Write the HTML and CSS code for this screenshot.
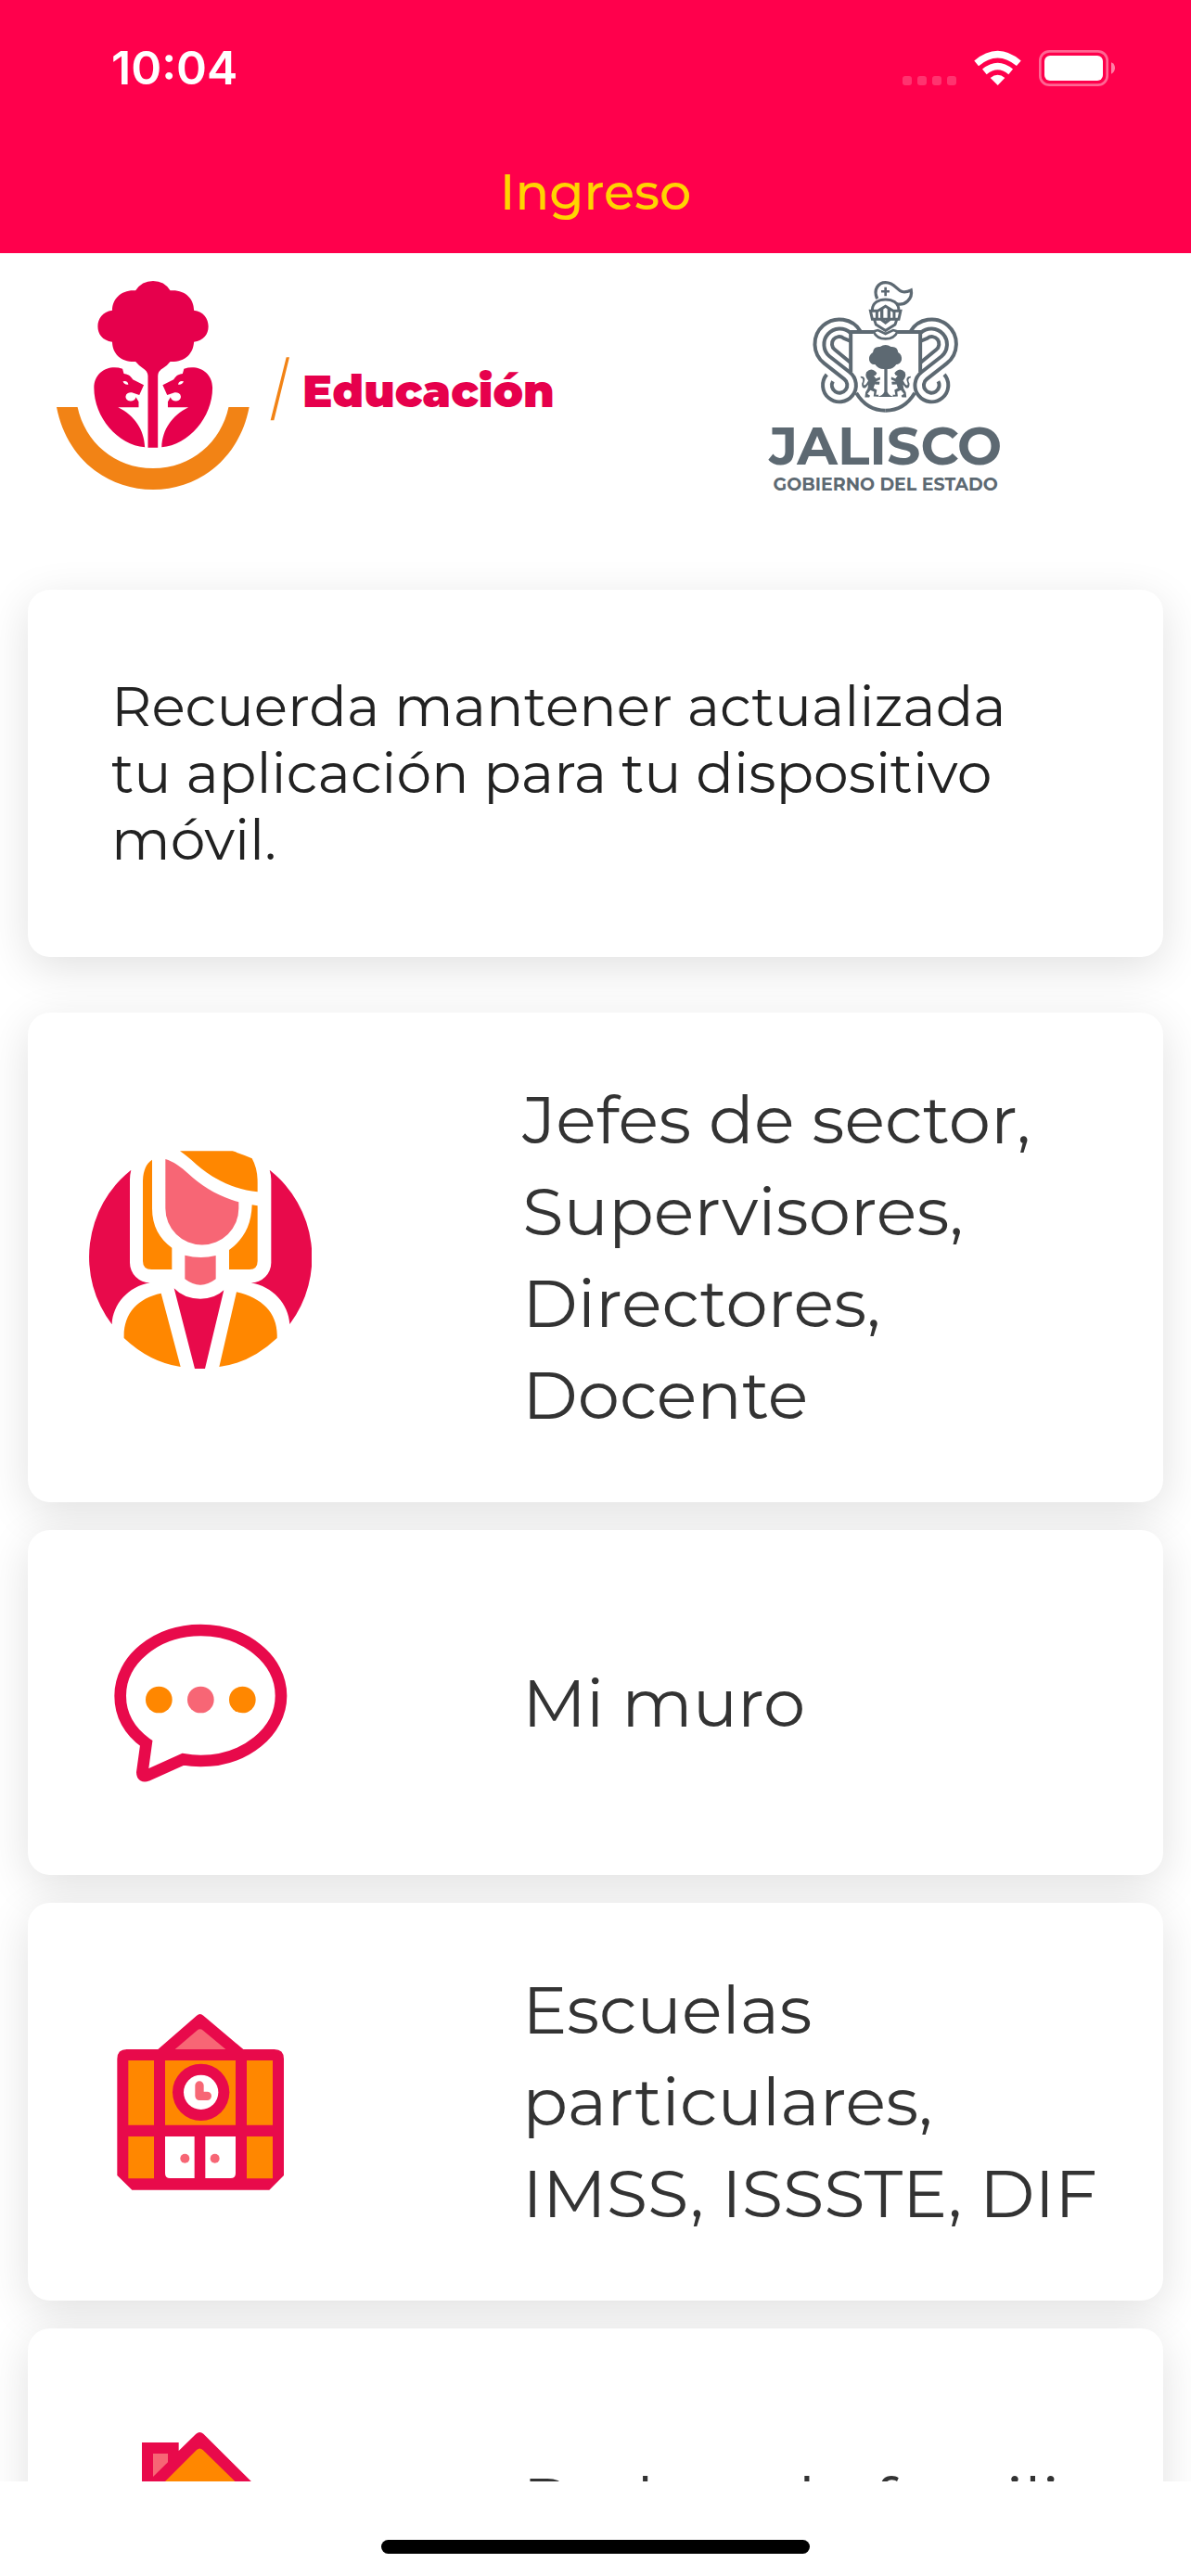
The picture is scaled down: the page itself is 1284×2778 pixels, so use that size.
FILE: index.html
```html
<!DOCTYPE html>
<html lang="es">
<head>
<meta charset="utf-8">
<meta name="viewport" content="width=device-width, initial-scale=1">
<title>Ingreso</title>
<link rel="stylesheet" href="styles.css">
</head>
<body>
<header class="header">
  <div class="status">
    <span class="time">10:04</span>
    <svg class="status-icons" viewBox="39 39 687 117" aria-hidden="true">
      <g fill="#fff" fill-opacity=".2">
        <rect x="39" y="123" width="30" height="30" rx="9"/>
        <rect x="87" y="123" width="30" height="30" rx="9"/>
        <rect x="135" y="123" width="30" height="30" rx="9"/>
        <rect x="183" y="123" width="30" height="30" rx="9"/>
      </g>
      <g fill="none" stroke="#fff" stroke-width="22">
        <path d="M278 82Q347 24 415 82"/>
        <path d="M304 109Q347 74 389 109"/>
      </g>
      <path fill="#fff" d="M323 129Q347 110 370 129L347 153Z"/>
      <rect x="484" y="43" width="217" height="109" rx="30" fill="none" stroke="#fff" stroke-opacity=".4" stroke-width="8"/>
      <rect x="498" y="57" width="189" height="81" rx="18" fill="#fff"/>
      <path fill="#fff" fill-opacity=".5" d="M714 79Q726 84 726 97T714 116Z"/>
    </svg>
  </div>
  <h1 class="title">Ingreso</h1>
</header>

<main class="content">
  <div class="logos">
    <div class="logo-edu">
      <svg class="edu-mark" viewBox="57 39 678 675" preserveAspectRatio="none" aria-hidden="true">
        <g fill="#e6004c">
          <path d="M287 70Q305 39 338 39T388 70C430 66 457 95 457 134C485 138 499 160 499 186S485 232 457 236C455 275 430 302 388 300Q380 312 368 320Q352 330 352 346V578H323V346Q322 330 308 321Q296 312 287 300C245 302 220 275 219 236C190 232 177 210 177 186S190 138 219 134C219 95 248 66 287 70Z"/>
          <path id="lion" fill-rule="evenodd" d="M249 323C210 308 166 332 166 385C166 480 235 570 314 577C312 520 284 474 236 448H296V430L288 415A15 14 0 1 1 276 400L298 408L311 376L279 358C272 344 262 340 253 339ZM250 364Q264 360 266 374Q254 376 250 364Z"/>
          <use href="#lion" transform="translate(677 0) scale(-1 1)"/>
        </g>
        <path fill="#f28315" d="M57 447H118C140 560 225 645 338 645S536 560 558 447H618C590 610 475 714 338 714S85 610 57 447ZM726 286H735L690 490H680Z"/>
      </svg>
      <span class="edu-name">Educación</span>
    </div>
    <div class="logo-jal">
      <svg class="jal-mark" viewBox="25 24 471 428" aria-hidden="true">
        <g fill="none" stroke="#5d6972" stroke-width="12">
          <g id="scroll">
            <path d="M180 188A80 80 0 1 0 62 292L127 343A25 25 0 1 1 90 350"/>
            <path d="M147 193A51 51 0 1 0 79 269L144 320A54 54 0 1 1 70 328"/>
            <path d="M148 220L125 210A23 23 0 1 0 96 247L148 290"/>
            <path d="M222 190H148V320M166 388Q200 445 261 445"/>
          </g>
          <use href="#scroll" transform="translate(522 0) scale(-1 1)"/>
          <path d="M222 188Q232 212 261 212T300 188L286 184L261 196L236 184Z" stroke-width="8"/>
          <path d="M234 82C220 52 238 29 261 29C302 29 298 76 344 54C350 82 324 106 296 98" stroke-width="10"/>
          <path d="M218 118C218 94 240 84 261 84S304 94 304 118M212 121H236L261 106L286 121H310L304 148H218ZM224 148L230 166L261 185L292 166L298 148M233 122V146M289 122V146M244 147L261 160L278 147" stroke-width="9"/>
        </g>
        <g fill="#5d6972">
          <path d="M257 44H265V54H274V62H265V73H257V62H247V54H257ZM244 118L254 112V148L244 144ZM267 112L277 118V144L267 148Z"/>
          <path d="M243 238Q261 226 279 238Q300 236 302 256Q316 264 313 282Q307 297 296 295Q286 311 267 310V384Q270 396 291 401H231Q254 396 257 384V310Q238 311 227 295Q213 298 208 282Q205 266 220 256Q222 236 243 238Z"/>
          <path id="crest-lion" d="M199 320Q213 306 227 317L233 323L229 331L223 332L230 341L243 336L244 344L229 351L242 352L241 361L226 360L222 372L233 378L230 394H239L237 400L222 399L224 384L212 379L202 391L211 397L208 402H194L196 386L203 374L205 361L196 371Q184 376 184 358Q193 341 180 338V334Q201 335 190 358Q189 367 198 359L205 348Q193 334 199 320Z"/>
          <use href="#crest-lion" transform="translate(523 0) scale(-1 1)"/>
        </g>
      </svg>
      <span class="jal-name">JALISCO</span>
      <span class="jal-sub">GOBIERNO DEL ESTADO</span>
    </div>
  </div>

  <p class="card notice">Recuerda mantener actualizada tu aplicación para tu dispositivo móvil.</p>

  <nav class="menu">
    <a class="card item" href="#docentes">
      <svg class="icon" viewBox="48 48 720 720" aria-hidden="true">
        <path fill="#e80a4b" d="M184 125Q180 140 180 160V425A65 65 0 0 0 245 490C175 503 125 558 122 625A360 360 0 0 1 184 125ZM632 125Q637 140 637 160V425A65 65 0 0 1 572 490C642 503 693 558 697 624A360 360 0 0 0 632 125ZM323 508Q355 542 408 542Q455 542 484 514L423 768H390Z"/>
        <path fill="#ff8700" d="M252 92C230 105 222 135 222 165V420Q222 447 250 447H316V377C275 348 252 305 252 250ZM575 238L593 241V420Q593 447 567 447H501V384C548 350 573 305 575 238ZM342 64H512Q545 74 575 88Q593 120 593 165V196C520 190 450 155 395 107Q365 80 342 64ZM281 524L344 762Q245 748 161 669C158 590 205 540 281 524ZM525 520C610 540 660 590 656 669Q570 750 469 762Z"/>
        <path fill="#f76675" d="M295 90C320 97 345 115 370 138C415 180 470 212 532 229V250A118 117 0 0 1 295 250ZM358 401Q408 415 458 402V478Q408 516 358 478Z"/>
      </svg>
      <span class="label">Jefes de sector, Supervisores, Directores, Docente</span>
    </a>
    <a class="card item" href="#muro">
      <svg class="icon" viewBox="-12 -44 720 720" aria-hidden="true">
        <path fill="none" stroke="#e80a4b" stroke-width="38" d="M173 448C118 408 89 355 89 294C89 178 205 82 349 82S609 178 609 294S493 505 349 505Q320 505 292 500L176 552Q160 558 160 542Z"/>
        <circle cx="214" cy="307" r="43" fill="#ff8700"/>
        <circle cx="349" cy="307" r="43" fill="#f76675"/>
        <circle cx="484" cy="307" r="43" fill="#ff8700"/>
      </svg>
      <span class="label">Mi muro</span>
    </a>
    <a class="card item" href="#escuelas">
      <svg class="icon" viewBox="-12 -12 720 720" aria-hidden="true">
        <path fill="#e80a4b" d="M211 177L336 68Q347 58 358 68L487 177H587Q618 177 618 208V585L571 632H127L79 585V208Q79 177 110 177Z"/>
        <path fill="#f76675" d="M266 177L337 116Q347 108 357 116L430 177Z"/>
        <path fill="#ff8700" d="M115 213H198V422H115ZM234 213H462V422H234ZM498 213H582V422H498ZM115 459H198V595H115ZM498 459H582V595H498Z"/>
        <circle cx="350" cy="316" r="92" fill="#e80a4b"/>
        <circle cx="350" cy="316" r="56" fill="#fff"/>
        <path fill="none" stroke="#f76675" stroke-width="28" stroke-linecap="round" stroke-linejoin="round" d="M345 294V328H370"/>
        <path fill="#fff" d="M234 459H329V594H250Q234 594 234 578ZM364 459H462V578Q462 594 446 594H364Z"/>
        <circle cx="298" cy="530" r="15" fill="#f76675"/>
        <circle cx="395" cy="530" r="15" fill="#f76675"/>
      </svg>
      <span class="label">Escuelas particulares, IMSS, ISSSTE, DIF</span>
    </a>
    <a class="card item" href="#familia">
      <svg class="icon" viewBox="-102 -69 720 720" aria-hidden="true">
        <path fill="#e80a4b" d="M69 102H188V129L244 74Q256 64 268 74L520 325H450V560H69V325H-4L69 252Z"/>
        <path fill="#f76675" d="M105 138H153V166L105 213Z"/>
        <path fill="#ff8700" d="M105 267L246 126Q256 117 266 126L414 271V524H105Z"/>
      </svg>
      <span class="label">Padres de familia</span>
    </a>
  </nav>
</main>

<footer class="home"><span class="home-bar"></span></footer>
</body>
</html>
```
FILE: styles.css
```css
* {
  box-sizing: border-box;
}

body {
  margin: 0;
  height: 100vh;
  display: flex;
  flex-direction: column;
  background: #fff;
  color: #222;
  font-family: Montserrat, Inter, sans-serif;
}

.header {
  flex: none;
  background: #ff004c;
}

.status {
  display: flex;
  justify-content: space-between;
  align-items: center;
  height: 141px;
  padding: 5px 82px 0 120px;
}

.time {
  color: #fff;
  font-family: Inter, sans-serif;
  font-size: 50px;
  font-weight: 600;
}

.status-icons {
  width: 229px;
  height: 39px;
}

.title {
  margin: 0;
  color: #ffd400;
  font-size: 54px;
  font-weight: 500;
  line-height: 132px;
  text-align: center;
}

.content {
  flex: 1;
  min-height: 0;
  overflow: hidden;
  padding: 30px;
}

.logos {
  display: flex;
  justify-content: space-between;
  padding: 0 174px 0 31px;
}

.logo-edu {
  display: flex;
  align-items: center;
  gap: 14px;
}

.edu-mark {
  width: 251px;
  height: 225px;
}

.edu-name {
  padding-top: 12px;
  color: #e6004c;
  font-size: 48px;
  font-weight: 900;
}

.logo-jal {
  display: flex;
  flex-direction: column;
  align-items: center;
  color: #5d6972;
  font-weight: 700;
}

.jal-mark {
  width: 157px;
  height: 142px;
}

.jal-name {
  font-size: 57px;
  line-height: 72px;
}

.jal-sub {
  font-size: 19px;
  line-height: 11px;
}

.card {
  border-radius: 24px;
  background: #fff;
  box-shadow: 0 12px 48px rgba(0, 0, 0, 0.12);
}

.notice {
  margin: 108px 0 60px;
  padding: 90px;
  font-size: 60px;
  line-height: 72px;
}

.menu {
  display: flex;
  flex-direction: column;
  gap: 30px;
}

.item {
  display: grid;
  grid-template-columns: 7fr 10fr;
  gap: 30px;
  align-items: center;
  padding: 66px;
  color: #333;
  text-decoration: none;
}

.icon {
  width: 240px;
  height: 240px;
}

.label {
  font-size: 72px;
  line-height: 99px;
}

.home {
  flex: none;
  display: flex;
  justify-content: center;
  align-items: flex-end;
  height: 102px;
  padding-bottom: 24px;
}

.home-bar {
  width: 36%;
  height: 15px;
  border-radius: 8px;
  background: #000;
}
```
